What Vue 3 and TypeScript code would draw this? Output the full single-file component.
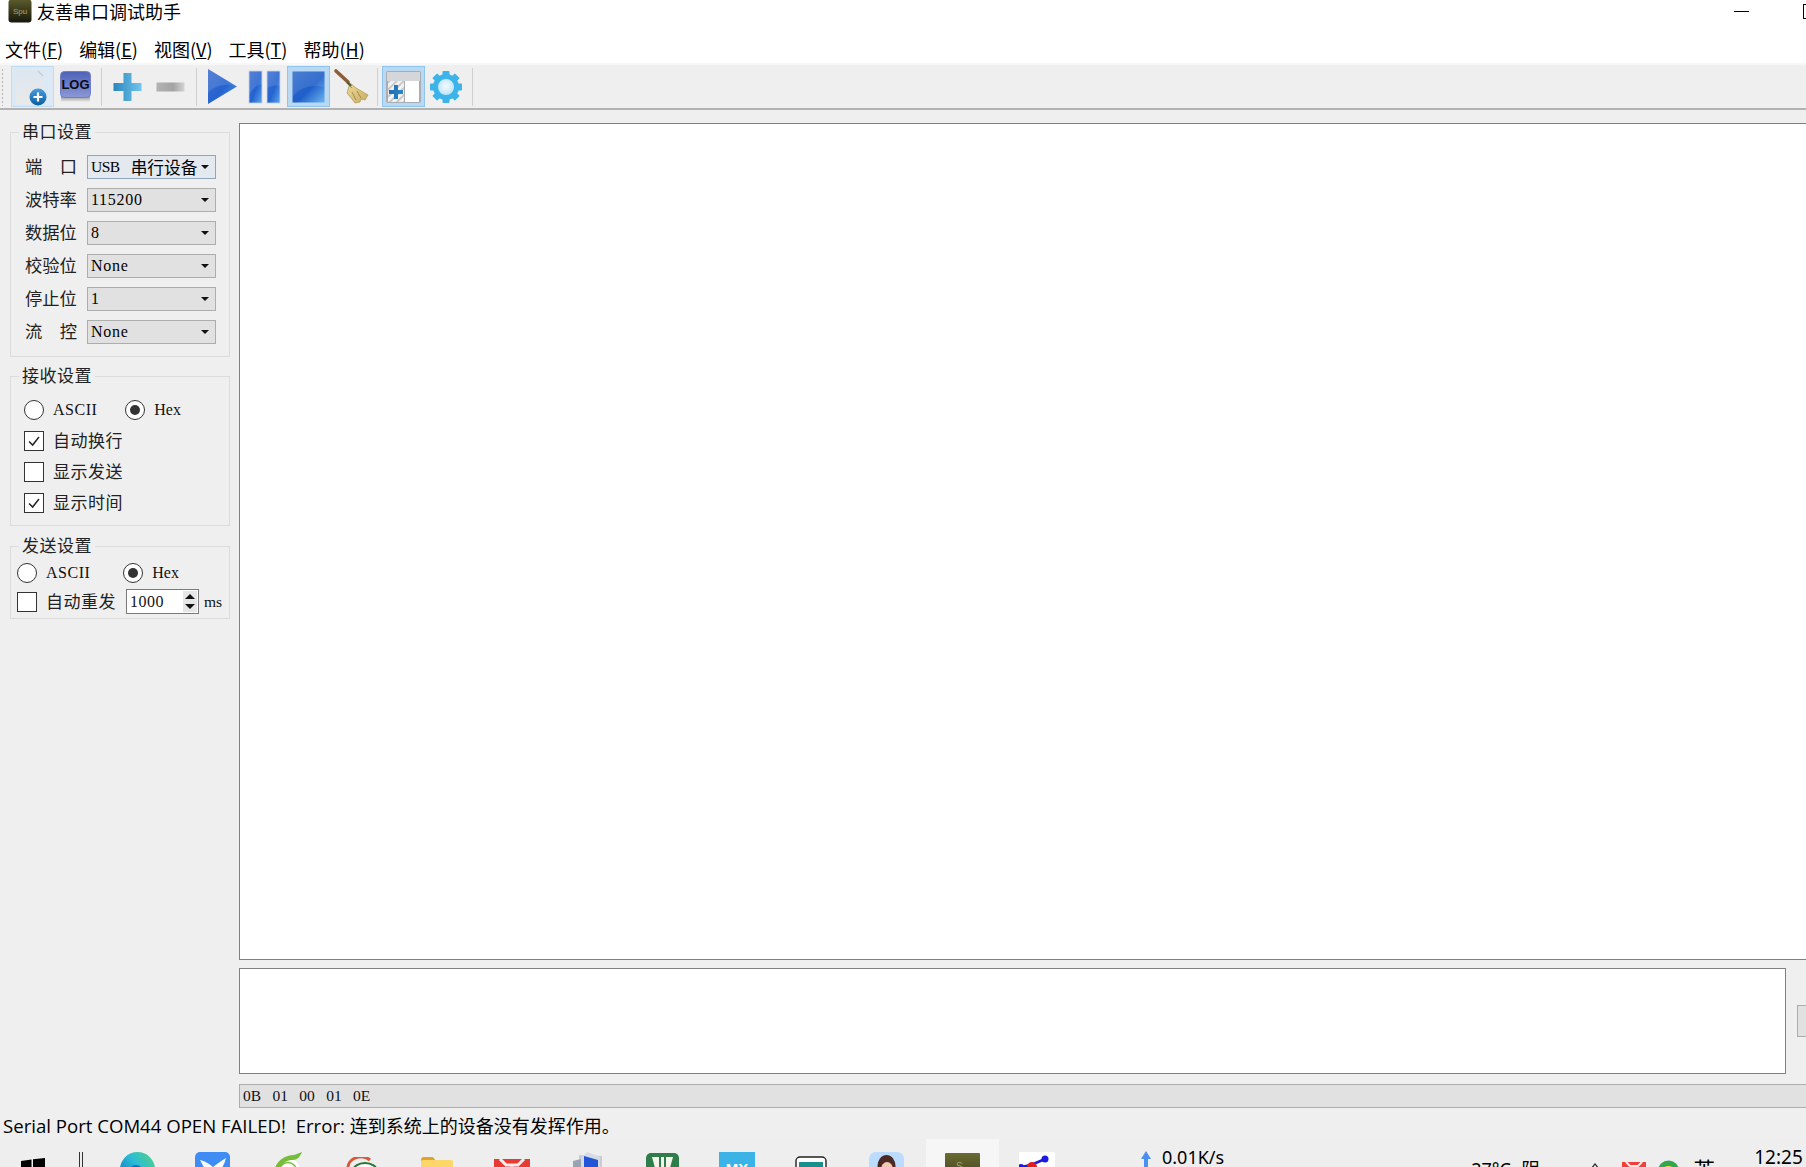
<script setup lang="ts">
const menus = ['文件(F)', '编辑(E)', '视图(V)', '工具(T)', '帮助(H)'].map((m) => {
  const i = m.indexOf('(')
  return { head: m.slice(0, i + 1), key: m[i + 1], tail: ')' }
})
const rows = [
  { label: ['端', '口'], latin: 'USB', cjk: '串行设备', active: true },
  { label: ['波特率'], latin: '115200', cjk: '', active: false },
  { label: ['数据位'], latin: '8', cjk: '', active: false },
  { label: ['校验位'], latin: 'None', cjk: '', active: false },
  { label: ['停止位'], latin: '1', cjk: '', active: false },
  { label: ['流', '控'], latin: 'None', cjk: '', active: false }
]
const gearTeeth = [0, 45, 90, 135, 180, 225, 270, 315]
</script>

<template>
  <div class="app">
    <header class="titlebar">
      <svg class="app-icon" viewBox="0 0 24 24">
        <defs>
          <linearGradient id="spu" x1="0" y1="0" x2="0" y2="1">
            <stop offset="0" stop-color="#5b5b2c" /><stop offset="1" stop-color="#17170c" />
          </linearGradient>
        </defs>
        <rect x="0.5" y="0.5" width="23" height="23" rx="3" fill="url(#spu)" />
        <text x="12" y="15" text-anchor="middle" font-size="8" fill="#a9a96a" font-family="Liberation Sans, sans-serif">Spu</text>
      </svg>
      <span class="title">友善串口调试助手</span>
      <span class="win-min"></span>
      <span class="win-max"></span>
    </header>

    <nav class="menubar">
      <span v-for="m in menus" :key="m.key" class="menu">{{ m.head }}<u>{{ m.key }}</u>{{ m.tail }}</span>
    </nav>

    <div class="toolbar">
      <div class="grip"></div>
      <button class="tool soft">
        <svg viewBox="0 0 43 41" width="43" height="41">
          <defs>
            <linearGradient id="page" x1="0" y1="0" x2="0" y2="1">
              <stop offset="0" stop-color="#dde7f0" /><stop offset="1" stop-color="#e9e9e9" />
            </linearGradient>
            <linearGradient id="disc" x1="0" y1="0" x2="0" y2="1">
              <stop offset="0" stop-color="#4a9ee0" /><stop offset="1" stop-color="#0a5e9e" />
            </linearGradient>
          </defs>
          <path d="M5 5H27L33 11V38H5Z" fill="url(#page)" />
          <path d="M27 5L32 10" stroke="#c6ccd2" stroke-width="1.4" fill="none" />
          <circle cx="27" cy="31" r="8.5" fill="url(#disc)" />
          <path d="M27 26.5V35.5M22.5 31H31.5" stroke="#fff" stroke-width="2.2" />
        </svg>
      </button>
      <button class="tool">
        <svg viewBox="0 0 43 41" width="43" height="41">
          <defs>
            <linearGradient id="logbg" x1="0" y1="0" x2="0" y2="1">
              <stop offset="0" stop-color="#4e62b8" /><stop offset="1" stop-color="#8b98d6" />
            </linearGradient>
            <linearGradient id="logsh" x1="0" y1="0" x2="0" y2="1">
              <stop offset="0" stop-color="#8b8b8b" /><stop offset="1" stop-color="#efefef" />
            </linearGradient>
          </defs>
          <rect x="7" y="30" width="29" height="6" fill="url(#logsh)" />
          <rect x="6.5" y="5.5" width="30" height="26" rx="4" fill="url(#logbg)" stroke="#6f7fc8" />
          <text x="21.5" y="23" text-anchor="middle" font-size="13" font-weight="700" fill="#0b0b14" font-family="Liberation Sans, sans-serif">LOG</text>
        </svg>
      </button>
      <div class="sep"></div>
      <button class="tool">
        <svg viewBox="0 0 43 41" width="43" height="41">
          <defs>
            <linearGradient id="plus" x1="0" y1="0" x2="1" y2="0">
              <stop offset="0" stop-color="#2b87bd" /><stop offset="1" stop-color="#72c6ee" />
            </linearGradient>
          </defs>
          <path d="M17.5 7H25.5V17H35.5V25H25.5V35H17.5V25H7.5V17H17.5Z" fill="url(#plus)" />
        </svg>
      </button>
      <button class="tool">
        <svg viewBox="0 0 43 41" width="43" height="41">
          <defs>
            <linearGradient id="minus" x1="0" y1="0" x2="1" y2="0">
              <stop offset="0" stop-color="#b2b2b2" /><stop offset="0.6" stop-color="#a4a4a4" /><stop offset="1" stop-color="#d4d4d4" />
            </linearGradient>
          </defs>
          <rect x="7.5" y="16.5" width="28" height="9" fill="url(#minus)" />
        </svg>
      </button>
      <div class="sep"></div>
      <button class="tool">
        <svg viewBox="0 0 43 41" width="43" height="41">
          <defs>
            <linearGradient id="blue" x1="0" y1="0" x2="1" y2="1">
              <stop offset="0" stop-color="#3f6fd0" /><stop offset="0.55" stop-color="#2563cf" /><stop offset="1" stop-color="#5ba6ec" />
            </linearGradient>
          </defs>
          <path d="M7 3L36 20.5L7 38Z" fill="url(#blue)" />
          <path d="M7 3L36 20.5C26 17 14 19 7 27Z" fill="#ffffff" opacity="0.12" />
        </svg>
      </button>
      <button class="tool">
        <svg viewBox="0 0 43 41" width="43" height="41">
          <rect x="5" y="5" width="13" height="32" fill="url(#blue)" stroke="#c6d4ea" stroke-width="0.8" />
          <rect x="23" y="5" width="13" height="32" fill="url(#blue)" stroke="#c6d4ea" stroke-width="0.8" />
          <path d="M5 5H18V18C13 19 8 23 5 29ZM23 5H36V20C31 19 26 20 23 22Z" fill="#fff" opacity="0.12" />
        </svg>
      </button>
      <button class="tool checked">
        <svg viewBox="0 0 43 41" width="43" height="41">
          <defs>
            <linearGradient id="stopg" x1="0" y1="0" x2="1" y2="1">
              <stop offset="0" stop-color="#3770cc" /><stop offset="0.55" stop-color="#1f5ec9" /><stop offset="1" stop-color="#6cb6f0" />
            </linearGradient>
          </defs>
          <rect x="5.5" y="5.5" width="32" height="31" fill="url(#stopg)" />
          <path d="M5.5 5.5H37.5V21C25 18 12 21 5.5 31Z" fill="#fff" opacity="0.1" />
        </svg>
      </button>
      <button class="tool">
        <svg viewBox="0 0 43 41" width="43" height="41">
          <defs>
            <linearGradient id="straw" x1="0" y1="0" x2="1" y2="1">
              <stop offset="0" stop-color="#ead99c" /><stop offset="1" stop-color="#c9ad62" />
            </linearGradient>
          </defs>
          <path d="M6 5L18 16" stroke="#8d5d3a" stroke-width="3.6" stroke-linecap="round" />
          <path d="M20 17L26 22L38 29L35 34L31 33L30 36L25 37L22 33L17 27Z" fill="url(#straw)" stroke="#b79a55" stroke-width="0.8" />
          <path d="M17 17L22 22M22 26L26 34M27 25L31 32" stroke="#a98c46" stroke-width="1" />
          <path d="M17 16L21 20" stroke="#556033" stroke-width="2.4" />
        </svg>
      </button>
      <div class="sep"></div>
      <button class="tool checked">
        <svg viewBox="0 0 43 41" width="43" height="41">
          <defs>
            <pattern id="hatch" width="5" height="5" patternUnits="userSpaceOnUse" patternTransform="rotate(45)">
              <rect width="5" height="5" fill="#f2f2f2" /><rect width="2" height="5" fill="#c9c9c9" />
            </pattern>
            <linearGradient id="plus2" x1="0" y1="0" x2="1" y2="0">
              <stop offset="0" stop-color="#1f6db0" /><stop offset="1" stop-color="#2b86c8" />
            </linearGradient>
          </defs>
          <rect x="4" y="5" width="35" height="32" rx="2" fill="#a8adb3" />
          <rect x="5" y="6" width="33" height="9" fill="#d4d6da" />
          <rect x="6" y="15" width="16" height="21" fill="url(#hatch)" />
          <rect x="23" y="15" width="14" height="21" fill="#fff" />
          <path d="M12 19H16V24H21V28H16V33H12V28H7V24H12Z" fill="url(#plus2)" />
        </svg>
      </button>
      <button class="tool">
        <svg viewBox="0 0 43 41" width="43" height="41">
          <defs>
            <radialGradient id="gearc" cx="0.5" cy="0.45" r="0.6">
              <stop offset="0" stop-color="#f4fbff" /><stop offset="1" stop-color="#a8dcf6" />
            </radialGradient>
          </defs>
          <g v-for="a in gearTeeth" :key="a" :transform="`rotate(${a} 21 21)`">
            <rect x="17.5" y="5" width="7" height="8" rx="1" fill="#3cb4ea" />
          </g>
          <circle cx="21" cy="21" r="10.5" fill="url(#gearc)" stroke="#3cb4ea" stroke-width="5" />
        </svg>
      </button>
      <div class="sep"></div>
    </div>

    <div class="body">
      <aside class="sidebar">
        <fieldset class="group serial">
          <legend>串口设置</legend>
          <div v-for="r in rows" :key="r.label.join('')" class="row">
            <span class="lbl"><i v-for="c in r.label" :key="c">{{ c }}</i></span>
            <div class="combo" :class="{ on: r.active }">
              <span class="combo-text" :class="{ short: r.cjk }">{{ r.latin }}</span>
              <span v-if="r.cjk" class="combo-cjk">{{ r.cjk }}</span>
              <span class="caret"></span>
            </div>
          </div>
        </fieldset>

        <fieldset class="group recv">
          <legend>接收设置</legend>
          <div class="opt-line">
            <span class="radio"></span><span class="latin ascii">ASCII</span>
            <span class="radio on hex-radio"></span><span class="latin">Hex</span>
          </div>
          <div class="opt-line check-line">
            <span class="check"><svg viewBox="0 0 20 20"><path d="M4.5 10.5L8.5 14.5L15.5 5.5" fill="none" stroke="#222" stroke-width="1.6" /></svg></span>
            <span class="opt">自动换行</span>
          </div>
          <div class="opt-line check-line">
            <span class="check"></span><span class="opt">显示发送</span>
          </div>
          <div class="opt-line check-line">
            <span class="check"><svg viewBox="0 0 20 20"><path d="M4.5 10.5L8.5 14.5L15.5 5.5" fill="none" stroke="#222" stroke-width="1.6" /></svg></span>
            <span class="opt">显示时间</span>
          </div>
        </fieldset>

        <fieldset class="group send">
          <legend>发送设置</legend>
          <div class="opt-line send-radio">
            <span class="radio"></span><span class="latin ascii">ASCII</span>
            <span class="radio on hex-radio2"></span><span class="latin">Hex</span>
          </div>
          <div class="opt-line send-check">
            <span class="check"></span><span class="opt">自动重发</span>
            <div class="spin">
              <span class="latin spin-val">1000</span>
              <div class="spin-btns"><i class="up"></i><i class="down"></i></div>
            </div>
            <span class="latin ms">ms</span>
          </div>
        </fieldset>
      </aside>

      <main class="content">
        <div class="output"></div>
        <div class="send-row">
          <div class="input"></div>
          <div class="send-btn"></div>
        </div>
        <div class="hexbar"><span class="latin hex-text">0B 01 00 01 0E</span></div>
      </main>
    </div>

    <div class="status"><span class="status-latin">Serial Port COM44 OPEN FAILED!&nbsp; Error: </span>连到系统上的设备没有发挥作用。</div>

    <footer class="taskbar">
      <svg class="t t-win" viewBox="0 0 24 24"><path d="M0 3L10.5 1.5V11.5H0ZM12 1.3L24 0V11.5H12ZM0 13H10.5V22.5L0 21ZM12 13H24V24L12 22.7Z" fill="#000" /></svg>
      <span class="t t-div"></span>
      <svg class="t t-edge" viewBox="0 0 35 35">
        <defs><linearGradient id="edge" x1="0" y1="0.8" x2="1" y2="0"><stop offset="0" stop-color="#1272c4" /><stop offset="0.5" stop-color="#2bbcd6" /><stop offset="1" stop-color="#55d47e" /></linearGradient></defs>
        <circle cx="17.5" cy="17.5" r="17.5" fill="url(#edge)" /><ellipse cx="16" cy="18" rx="6" ry="5" fill="#1272c4" />
      </svg>
      <svg class="t t-mail" viewBox="0 0 35 35">
        <rect width="35" height="35" rx="5" fill="#3f8cf5" /><path d="M5 8C9 9 15 12 18 15C22 12 26 9 31 6C29 14 25 20 20 24L12 21Z" fill="#fff" />
      </svg>
      <svg class="t t-green" viewBox="0 0 32 32">
        <circle cx="15" cy="19" r="13" fill="#fff" /><path d="M3 16C5 9 13 3 22 3L30 0C28 5 25 8 21 8C14 8 9 12 8 18Z" fill="#76bd3a" /><circle cx="16" cy="19" r="8.5" fill="#fff" stroke="#76bd3a" stroke-width="1.5" />
      </svg>
      <svg class="t t-swirl" viewBox="0 0 34 34">
        <path d="M2 12A13 11 0 0 1 24 3" fill="none" stroke="#d9573b" stroke-width="3" /><ellipse cx="19" cy="14" rx="12" ry="8" fill="#fff" stroke="#1f7a35" stroke-width="2" />
      </svg>
      <svg class="t t-folder" viewBox="0 0 32 24">
        <path d="M0 3Q0 0 3 0H12L15 4H0Z" fill="#e0a526" /><rect y="3" width="32" height="21" rx="2" fill="#fcd669" />
      </svg>
      <svg class="t t-wps" viewBox="0 0 36 24">
        <path d="M0 0H36V24H0Z" fill="#e63a33" /><path d="M6 0L12 6H24L30 0M18 8L10 24M18 8L26 24" fill="none" stroke="#eeeeee" stroke-width="3" />
      </svg>
      <svg class="t t-doc" viewBox="0 0 31 30">
        <path d="M6 3L29 4V30H6Z" fill="#c7cdd8" /><path d="M3 12L14 0L27 5V30H3Z" fill="#d6dbe3" /><path d="M11 4L25 8V30H11Z" fill="#2254d8" /><path d="M0 9L8 7V30H0Z" fill="#9aa3b2" />
      </svg>
      <svg class="t t-word" viewBox="0 0 33 33">
        <rect width="33" height="33" rx="5" fill="#2f7d4a" /><path d="M6 4H27L22 22H11Z" fill="#f3f5ea" /><path d="M13 4V16H15V4ZM18 4V16H20V4Z" fill="#2f7d4a" />
      </svg>
      <svg class="t t-mx" viewBox="0 0 36 30">
        <rect width="36" height="30" fill="#3bb3e6" />
        <text x="18" y="22" text-anchor="middle" font-size="15" font-weight="700" fill="#fff" font-family="Liberation Sans, sans-serif">MX</text>
      </svg>
      <svg class="t t-calc" viewBox="0 0 32 26">
        <rect x="1" y="1" width="30" height="25" rx="4" fill="#fff" stroke="#222" stroke-width="1.4" /><rect x="4" y="6" width="24" height="18" fill="#17908c" />
      </svg>
      <svg class="t t-face" viewBox="0 0 35 32">
        <rect width="35" height="32" rx="7" fill="#bcdcff" /><ellipse cx="17.5" cy="14" rx="9" ry="11" fill="#4a2a22" /><ellipse cx="18" cy="18" rx="6" ry="8" fill="#f3c9b1" />
      </svg>
      <div class="t t-active">
        <svg class="t-spu" viewBox="0 0 35 28">
          <defs><linearGradient id="spu2" x1="0" y1="0" x2="0" y2="1"><stop offset="0" stop-color="#6b6b32" /><stop offset="1" stop-color="#3e3e1c" /></linearGradient></defs>
          <rect width="35" height="28" rx="1" fill="url(#spu2)" />
          <text x="11" y="17" font-size="10" fill="#a9a96a" font-family="Liberation Sans, sans-serif">S</text>
        </svg>
      </div>
      <svg class="t t-sprocket" viewBox="0 0 36 30">
        <rect width="36" height="30" fill="#fff" /><path d="M2 15L12 13L26 7" fill="none" stroke="#1a1ae0" stroke-width="2.5" /><circle cx="26" cy="7" r="3.5" fill="#1a1ae0" /><circle cx="2" cy="15" r="3" fill="#1a1ae0" /><circle cx="13" cy="15" r="5" fill="#e21c1c" />
      </svg>
      <svg class="t t-up" viewBox="0 0 10 20"><path d="M5 0L10 8H7V20H3V8H0Z" fill="#4a90f0" /></svg>
      <span class="t t-speed">0.01K/s</span>
      <span class="t t-weather">27°C 阴</span>
      <svg class="t t-caret" viewBox="0 0 10 6"><path d="M1 6L5 1L9 6" fill="none" stroke="#222" stroke-width="1.2" /></svg>
      <svg class="t t-wps2" viewBox="0 0 24 16"><rect width="24" height="16" fill="#f0403a" /><path d="M4 0L8 4H16L20 0M12 6L7 16M12 6L17 16" fill="none" stroke="#eee" stroke-width="2" /></svg>
      <svg class="t t-dot" viewBox="0 0 21 24"><circle cx="10.5" cy="12" r="10.5" fill="#31a84f" /><circle cx="10.5" cy="15" r="8" fill="#f4e23a" /></svg>
      <span class="t t-en">英</span>
      <span class="t t-time">12:25</span>
    </footer>
  </div>
</template>

<style scoped>
.app {
  width: 1806px;
  height: 1167px;
  overflow: hidden;
  display: flex;
  flex-direction: column;
  background: #efefef;
  color: #000;
  font-family: "Noto Sans CJK SC", "Noto Sans", sans-serif;
}
.titlebar {
  height: 24px;
  flex: none;
  background: #fff;
  display: flex;
  align-items: center;
  padding-left: 8px;
}
.app-icon { width: 24px; height: 24px; margin-top: -2px; }
.title { margin-left: 5px; font-size: 18px; line-height: 22px; align-self: flex-start; }
.win-min { margin-left: auto; width: 15px; height: 1px; background: #000; margin-top: -2px; }
.win-max {
  margin-left: 54px;
  width: 2px;
  height: 13px;
  margin-top: -2px;
  border: 1px solid #000;
  border-right: none;
}
.menubar {
  height: 39px;
  flex: none;
  background: #fff;
  padding: 13px 0 0 5px;
  box-sizing: border-box;
  display: flex;
  gap: 16px;
}
.menu { font-size: 18px; line-height: 25px; }
.toolbar {
  height: 47px;
  flex: none;
  box-sizing: border-box;
  border-top: 2px solid #f7f7f7;
  border-bottom: 2px solid #b2b2b2;
  background: #efefef;
  display: flex;
  align-items: center;
  padding-left: 1px;
}
.grip {
  width: 3px;
  height: 38px;
  margin-right: 7px;
  background-image: radial-gradient(#b5b5b5 0.9px, transparent 1px);
  background-size: 3px 4px;
}
.tool {
  width: 43px;
  height: 41px;
  padding: 0;
  border: 1px solid transparent;
  background: transparent;
  box-sizing: border-box;
  display: flex;
  align-items: center;
  justify-content: center;
  overflow: hidden;
}
.tool svg { flex: none; display: block; }
.tool.soft { background: #dce9f4; border-color: #bfdcf2; }
.tool.checked { background: #b9d9f3; border-color: #8ec5f0; }
.sep {
  width: 9px;
  height: 38px;
  flex: none;
  background: linear-gradient(#cfcfcf, #cfcfcf) no-repeat 4px 0 / 1px 100%;
}
.body { flex: 1; display: flex; min-height: 0; }
.sidebar {
  width: 239px;
  flex: none;
  box-sizing: border-box;
  padding: 12px 0 0 10px;
  display: flex;
  flex-direction: column;
}
.group {
  width: 220px;
  box-sizing: border-box;
  margin: 0;
  border: 1px solid #dcdcdc;
  padding: 0;
  min-width: 0;
  flex: none;
}
.group legend {
  font-size: 17px;
  line-height: 18px;
  padding: 0 3px 2px;
  margin-left: 8px;
  letter-spacing: 0.5px;
  color: #222;
}
.serial { height: 235px; padding-top: 13px; }
.row {
  height: 24px;
  margin-bottom: 9px;
  display: flex;
  align-items: center;
}
.lbl {
  width: 52px;
  margin-left: 14px;
  display: flex;
  justify-content: space-between;
  font-size: 17.3px;
  line-height: 22px;
  padding-bottom: 2px;
  color: #222;
  white-space: nowrap;
}
.lbl i { font-style: normal; }
.combo {
  margin-left: 10px;
  width: 129px;
  height: 24px;
  box-sizing: border-box;
  background: #e1e1e1;
  border: 1px solid #adadad;
  display: flex;
  align-items: center;
  padding-left: 3px;
  position: relative;
}
.combo.on { border-color: #8ea5bb; background: #e3e9ee; }
.combo-text {
  font-family: "Liberation Serif", serif;
  font-size: 16px;
  letter-spacing: 0.7px;
  white-space: nowrap;
}
.combo-text.short { font-size: 15.5px; letter-spacing: -0.5px; }
.combo-cjk {
  margin-left: 11px;
  font-size: 16.7px;
  line-height: 22px;
  white-space: nowrap;
}
.caret {
  position: absolute;
  right: 6px;
  top: 9px;
  width: 0;
  height: 0;
  border-left: 4px solid transparent;
  border-right: 4px solid transparent;
  border-top: 4px solid #111;
}
.recv { height: 160px; margin-top: 9px; padding-top: 13px; }
.send { height: 83px; margin-top: 10px; }
.opt-line { display: flex; align-items: center; height: 22px; padding-left: 13px; }
.check-line { margin-top: 9px; }
.radio {
  width: 20px;
  height: 20px;
  box-sizing: border-box;
  flex: none;
  border: 1px solid #333;
  border-radius: 50%;
  background: #fff;
  display: flex;
  align-items: center;
  justify-content: center;
}
.radio.on::after {
  content: "";
  width: 10px;
  height: 10px;
  border-radius: 50%;
  background: #333;
}
.latin {
  font-family: "Liberation Serif", serif;
  font-size: 16px;
  color: #111;
}
.ascii { margin-left: 9px; letter-spacing: 0.5px; }
.hex-radio { margin-left: 28px; margin-right: 9px; }
.hex-radio2 { margin-left: 33px; margin-right: 9px; }
.check {
  width: 20px;
  height: 20px;
  box-sizing: border-box;
  flex: none;
  border: 1px solid #333;
  background: #fff;
}
.check svg { display: block; width: 18px; height: 18px; }
.opt { margin-left: 9px; font-size: 17px; line-height: 20px; padding-bottom: 2px; letter-spacing: 0.5px; color: #222; }
.send-radio { padding-left: 6px; margin-top: 7px; height: 20px; }
.send-check { padding-left: 6px; margin-top: 6px; height: 25px; }
.spin {
  margin-left: 10px;
  width: 73px;
  height: 25px;
  box-sizing: border-box;
  flex: none;
  background: #fff;
  border: 1px solid #7a7a7a;
  display: flex;
  align-items: center;
  padding-left: 3px;
  position: relative;
}
.spin-val { letter-spacing: 0.5px; }
.spin-btns {
  position: absolute;
  right: 1px;
  top: 1px;
  bottom: 1px;
  width: 14px;
  background: #e6e6e6;
  display: flex;
  flex-direction: column;
  align-items: center;
  justify-content: space-around;
}
.spin-btns i { width: 0; height: 0; border-left: 5px solid transparent; border-right: 5px solid transparent; }
.spin-btns .up { border-bottom: 5px solid #111; }
.spin-btns .down { border-top: 5px solid #111; }
.ms { margin-left: 5px; font-size: 15.5px; }
.content { flex: 1; min-width: 0; padding-top: 13px; display: flex; flex-direction: column; }
.output {
  height: 837px;
  width: 1700px;
  flex: none;
  box-sizing: border-box;
  background: #fff;
  border: 1.5px solid #808080;
}
.send-row { display: flex; margin-top: 8px; height: 106px; flex: none; }
.input {
  width: 1547px;
  height: 106px;
  flex: none;
  box-sizing: border-box;
  background: #fff;
  border: 1.5px solid #808080;
}
.send-btn {
  margin: 37px 0 0 11px;
  width: 40px;
  height: 32px;
  flex: none;
  box-sizing: border-box;
  background: #e1e1e1;
  border: 1px solid #adadad;
}
.hexbar {
  margin-top: 10px;
  height: 24px;
  flex: none;
  width: 1700px;
  box-sizing: border-box;
  background: #e1e1e1;
  border: 1px solid #adadad;
  padding-left: 3px;
  display: flex;
  align-items: center;
}
.hex-text { font-size: 15.5px; word-spacing: 7.5px; }
.status {
  height: 31px;
  flex: none;
  box-sizing: border-box;
  padding-left: 3px;
  font-size: 18px;
  line-height: 34px;
  white-space: nowrap;
  font-family: "Noto Sans CJK SC", sans-serif;
}
.status-latin { font-family: "Open Sans", sans-serif; font-size: 18.6px; }
.taskbar {
  height: 28px;
  flex: none;
  background: #eeeeee;
  display: flex;
  align-items: flex-start;
  overflow: hidden;
  font-family: "Noto Sans", "Noto Sans CJK SC", sans-serif;
}
.t { flex: none; display: block; }
.t-win { width: 24px; height: 24px; margin: 19px 0 0 21px; }
.t-div { width: 4px; height: 20px; margin: 13px 0 0 34px; border-left: 1px solid #333; border-right: 1px solid #333; box-sizing: border-box; }
.t-edge { width: 35px; height: 35px; margin: 13px 0 0 37px; }
.t-mail { width: 35px; height: 35px; margin: 13px 0 0 40px; }
.t-green { width: 32px; height: 32px; margin: 13px 0 0 42px; }
.t-swirl { width: 34px; height: 34px; margin: 18px 0 0 42px; }
.t-folder { width: 32px; height: 24px; margin: 18px 0 0 41px; }
.t-wps { width: 36px; height: 24px; margin: 20px 0 0 41px; }
.t-doc { width: 31px; height: 30px; margin: 13px 0 0 43px; }
.t-word { width: 33px; height: 33px; margin: 14px 0 0 42px; }
.t-mx { width: 36px; height: 30px; margin: 13px 0 0 40px; }
.t-calc { width: 32px; height: 26px; margin: 17px 0 0 40px; }
.t-face { width: 35px; height: 32px; margin: 13px 0 0 42px; }
.t-active { width: 73px; height: 28px; margin-left: 22px; background: #f6f6f6; padding: 14px 0 0 19px; box-sizing: border-box; }
.t-spu { width: 35px; height: 28px; display: block; }
.t-sprocket { width: 36px; height: 30px; margin: 13px 0 0 20px; }
.t-up { width: 10px; height: 20px; margin: 12px 0 0 86px; }
.t-speed { margin: 6px 0 0 11px; font-size: 18px; line-height: 24px; }
.t-weather { margin: 18px 0 0 247px; font-size: 18px; line-height: 24px; width: 81px; white-space: nowrap; word-spacing: 6px; }
.t-caret { width: 10px; height: 6px; margin: 24px 0 0 38px; }
.t-wps2 { width: 24px; height: 16px; margin: 23px 0 0 22px; }
.t-dot { width: 21px; height: 24px; margin: 20px 0 0 12px; }
.t-en { margin: 17px 0 0 14px; font-size: 22px; line-height: 24px; font-family: "Noto Sans CJK SC", sans-serif; }
.t-time { margin: 6px 0 0 39px; font-size: 19px; line-height: 24px; }
</style>
